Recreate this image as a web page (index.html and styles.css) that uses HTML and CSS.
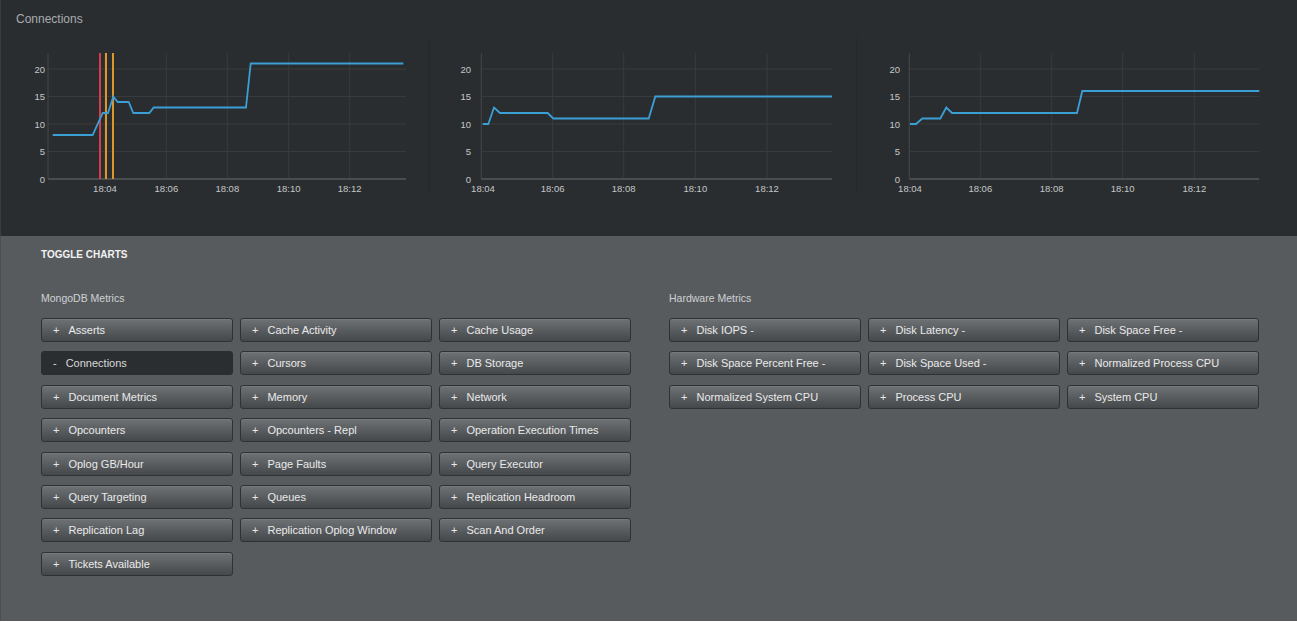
FILE: index.html
```html
<!DOCTYPE html>
<html lang="en">
<head>
<meta charset="utf-8">
<title>Connections</title>
<link rel="stylesheet" href="styles.css">
</head>
<body>
<div class="page">
  <section class="charts-panel">
    <h2 class="panel-title">Connections</h2>
    <div class="charts">
      <div class="chart">
        <svg width="429" height="156" viewBox="0 37 429 156">
          <g class="grid">
            <line x1="47" y1="69" x2="405" y2="69"/>
            <line x1="47" y1="96.5" x2="405" y2="96.5"/>
            <line x1="47" y1="124" x2="405" y2="124"/>
            <line x1="47" y1="151.5" x2="405" y2="151.5"/>
            <line x1="104" y1="53" x2="104" y2="179"/>
            <line x1="165.3" y1="53" x2="165.3" y2="179"/>
            <line x1="226.3" y1="53" x2="226.3" y2="179"/>
            <line x1="287.7" y1="53" x2="287.7" y2="179"/>
            <line x1="348.7" y1="53" x2="348.7" y2="179"/>
          </g>
          <line class="axis" x1="47" y1="53" x2="47" y2="179"/>
          <line class="axis axis-x" x1="47" y1="179" x2="405" y2="179"/>
          <g class="ylabels">
            <text x="44" y="72.5">20</text>
            <text x="44" y="100">15</text>
            <text x="44" y="127.5">10</text>
            <text x="44" y="155">5</text>
            <text x="44" y="182.5">0</text>
          </g>
          <g class="xlabels">
            <text x="104" y="191.5">18:04</text>
            <text x="165.3" y="191.5">18:06</text>
            <text x="226.3" y="191.5">18:08</text>
            <text x="287.7" y="191.5">18:10</text>
            <text x="348.7" y="191.5">18:12</text>
          </g>
          <line class="mark mark-red" x1="99" y1="53" x2="99" y2="179"/>
          <line class="mark mark-orange" x1="105" y1="53" x2="105" y2="179"/>
          <line class="mark mark-orange" x1="112" y1="53" x2="112" y2="179"/>
          <polyline class="series" points="51.7,135 91.7,135 101.7,113 107,113 112.3,96.5 116.7,102 127.7,102 132.3,113 148.3,113 152.7,107.5 245,107.5 249.7,63.5 402.3,63.5"/>
        </svg>
      </div>
      <div class="chart">
        <svg width="426" height="156" viewBox="430 37 426 156">
          <g class="grid">
            <line x1="481.3" y1="69" x2="832" y2="69"/>
            <line x1="481.3" y1="96.5" x2="832" y2="96.5"/>
            <line x1="481.3" y1="124" x2="832" y2="124"/>
            <line x1="481.3" y1="151.5" x2="832" y2="151.5"/>
            <line x1="552.7" y1="53" x2="552.7" y2="179"/>
            <line x1="623.7" y1="53" x2="623.7" y2="179"/>
            <line x1="695.3" y1="53" x2="695.3" y2="179"/>
            <line x1="767" y1="53" x2="767" y2="179"/>
          </g>
          <line class="axis" x1="481.3" y1="53" x2="481.3" y2="179"/>
          <line class="axis axis-x" x1="481.3" y1="179" x2="832" y2="179"/>
          <g class="ylabels">
            <text x="471" y="72.5">20</text>
            <text x="471" y="100">15</text>
            <text x="471" y="127.5">10</text>
            <text x="471" y="155">5</text>
            <text x="471" y="182.5">0</text>
          </g>
          <g class="xlabels">
            <text x="483" y="191.5">18:04</text>
            <text x="552.7" y="191.5">18:06</text>
            <text x="623.7" y="191.5">18:08</text>
            <text x="695.3" y="191.5">18:10</text>
            <text x="767" y="191.5">18:12</text>
          </g>
          <polyline class="series" points="482.7,124 488.3,124 494,107.5 500,113 547.7,113 553.3,118.5 648.7,118.5 655.3,96.5 832,96.5"/>
        </svg>
      </div>
      <div class="chart">
        <svg width="440" height="156" viewBox="857 37 440 156">
          <g class="grid">
            <line x1="909.3" y1="69" x2="1259.3" y2="69"/>
            <line x1="909.3" y1="96.5" x2="1259.3" y2="96.5"/>
            <line x1="909.3" y1="124" x2="1259.3" y2="124"/>
            <line x1="909.3" y1="151.5" x2="1259.3" y2="151.5"/>
            <line x1="980.3" y1="53" x2="980.3" y2="179"/>
            <line x1="1051.7" y1="53" x2="1051.7" y2="179"/>
            <line x1="1122.7" y1="53" x2="1122.7" y2="179"/>
            <line x1="1194.3" y1="53" x2="1194.3" y2="179"/>
          </g>
          <line class="axis" x1="909.3" y1="53" x2="909.3" y2="179"/>
          <line class="axis axis-x" x1="909.3" y1="179" x2="1259.3" y2="179"/>
          <g class="ylabels">
            <text x="900" y="72.5">20</text>
            <text x="900" y="100">15</text>
            <text x="900" y="127.5">10</text>
            <text x="900" y="155">5</text>
            <text x="900" y="182.5">0</text>
          </g>
          <g class="xlabels">
            <text x="910" y="191.5">18:04</text>
            <text x="980.3" y="191.5">18:06</text>
            <text x="1051.7" y="191.5">18:08</text>
            <text x="1122.7" y="191.5">18:10</text>
            <text x="1194.3" y="191.5">18:12</text>
          </g>
          <polyline class="series" points="910,124 916,124 922.3,118.5 940.3,118.5 946.3,107.5 952,113 1077,113 1082.3,91 1259.3,91"/>
        </svg>
      </div>
    </div>
  </section>

  <section class="toggle">
    <h3 class="toggle-title">TOGGLE CHARTS</h3>
    <div class="groups">
      <div class="group">
        <h4 class="group-title">MongoDB Metrics</h4>
        <div class="btn-grid">
          <button class="btn"><span class="sign">+</span>Asserts</button>
          <button class="btn"><span class="sign">+</span>Cache Activity</button>
          <button class="btn"><span class="sign">+</span>Cache Usage</button>
          <button class="btn btn-active"><span class="sign">-</span>Connections</button>
          <button class="btn"><span class="sign">+</span>Cursors</button>
          <button class="btn"><span class="sign">+</span>DB Storage</button>
          <button class="btn"><span class="sign">+</span>Document Metrics</button>
          <button class="btn"><span class="sign">+</span>Memory</button>
          <button class="btn"><span class="sign">+</span>Network</button>
          <button class="btn"><span class="sign">+</span>Opcounters</button>
          <button class="btn"><span class="sign">+</span>Opcounters - Repl</button>
          <button class="btn"><span class="sign">+</span>Operation Execution Times</button>
          <button class="btn"><span class="sign">+</span>Oplog GB/Hour</button>
          <button class="btn"><span class="sign">+</span>Page Faults</button>
          <button class="btn"><span class="sign">+</span>Query Executor</button>
          <button class="btn"><span class="sign">+</span>Query Targeting</button>
          <button class="btn"><span class="sign">+</span>Queues</button>
          <button class="btn"><span class="sign">+</span>Replication Headroom</button>
          <button class="btn"><span class="sign">+</span>Replication Lag</button>
          <button class="btn"><span class="sign">+</span>Replication Oplog Window</button>
          <button class="btn"><span class="sign">+</span>Scan And Order</button>
          <button class="btn"><span class="sign">+</span>Tickets Available</button>
        </div>
      </div>
      <div class="group">
        <h4 class="group-title">Hardware Metrics</h4>
        <div class="btn-grid">
          <button class="btn"><span class="sign">+</span>Disk IOPS -</button>
          <button class="btn"><span class="sign">+</span>Disk Latency -</button>
          <button class="btn"><span class="sign">+</span>Disk Space Free -</button>
          <button class="btn"><span class="sign">+</span>Disk Space Percent Free -</button>
          <button class="btn"><span class="sign">+</span>Disk Space Used -</button>
          <button class="btn"><span class="sign">+</span>Normalized Process CPU</button>
          <button class="btn"><span class="sign">+</span>Normalized System CPU</button>
          <button class="btn"><span class="sign">+</span>Process CPU</button>
          <button class="btn"><span class="sign">+</span>System CPU</button>
        </div>
      </div>
    </div>
  </section>
</div>
</body>
</html>
```

FILE: styles.css
```css
html, body {
  margin: 0;
  padding: 0;
  background: #ffffff;
}

body {
  font-family: "Liberation Sans", Arial, sans-serif;
}

.page {
  width: 1297px;
}

/* ---------- chart panel ---------- */
.charts-panel {
  background: #2a2d2f;
  height: 236px;
  box-sizing: border-box;
  padding-top: 12px;
  border-left: 1px solid #3a3d3f;
}

.panel-title {
  margin: 0 0 0 15px;
  font-size: 12px;
  line-height: 15px;
  font-weight: normal;
  color: #a9acae;
}

.charts {
  margin-top: 10px;
  display: grid;
  grid-template-columns: 428px 427px 441px;
  height: 156px;
}

.chart {
  box-sizing: border-box;
  height: 156px;
}

.chart + .chart {
  border-left: 1px solid #25282a;
}

.chart svg {
  display: block;
}

.grid line {
  stroke: #383b3d;
  stroke-width: 1;
}

.axis {
  stroke: #45484a;
  stroke-width: 1;
}

.axis-x {
  stroke: #4a4d4f;
  stroke-width: 2;
}

.ylabels text {
  font-family: "Liberation Sans", Arial, sans-serif;
  font-size: 9.5px;
  fill: #c4c7c9;
  text-anchor: end;
}

.xlabels text {
  font-family: "Liberation Sans", Arial, sans-serif;
  font-size: 9.5px;
  fill: #c4c7c9;
  text-anchor: middle;
}

.mark {
  stroke-width: 2;
}

.mark-red {
  stroke: #cf3f4d;
}

.mark-orange {
  stroke: #dc962c;
}

.series {
  fill: none;
  stroke: #3b9fd5;
  stroke-width: 1.8;
  stroke-linejoin: miter;
}

/* ---------- toggle panel ---------- */
.toggle {
  background: #585b5e;
  height: 385px;
  box-sizing: border-box;
  padding: 13px 38px 0 40px;
  border-left: 1px solid #4c4f52;
}

.toggle-title {
  margin: 0;
  font-size: 10px;
  line-height: 12px;
  font-weight: bold;
  color: #f2f2f2;
}

.groups {
  margin-top: 31px;
  display: grid;
  grid-template-columns: 590px 590px;
  column-gap: 38px;
}

.group-title {
  margin: 0 0 13px;
  font-size: 10.5px;
  line-height: 13px;
  font-weight: normal;
  color: #cfd2d4;
}

.btn-grid {
  display: grid;
  grid-template-columns: repeat(3, 192px);
  column-gap: 7px;
  row-gap: 9.4px;
}

.btn {
  display: block;
  height: 24px;
  box-sizing: border-box;
  margin: 0;
  padding: 1px 0 0 11px;
  text-align: left;
  font-family: "Liberation Sans", Arial, sans-serif;
  font-size: 11px;
  line-height: 21px;
  color: #eaeaea;
  border: 1px solid #2f3234;
  border-radius: 3px;
  background: linear-gradient(#6f7275, #45484b);
  box-shadow: inset 0 1px 0 rgba(255, 255, 255, 0.06);
  white-space: nowrap;
}

.sign {
  display: inline-block;
  margin-right: 9px;
}

.btn-active {
  background: #2b2e30;
  border-color: #2b2e30;
  box-shadow: none;
  color: #dadada;
}
```
